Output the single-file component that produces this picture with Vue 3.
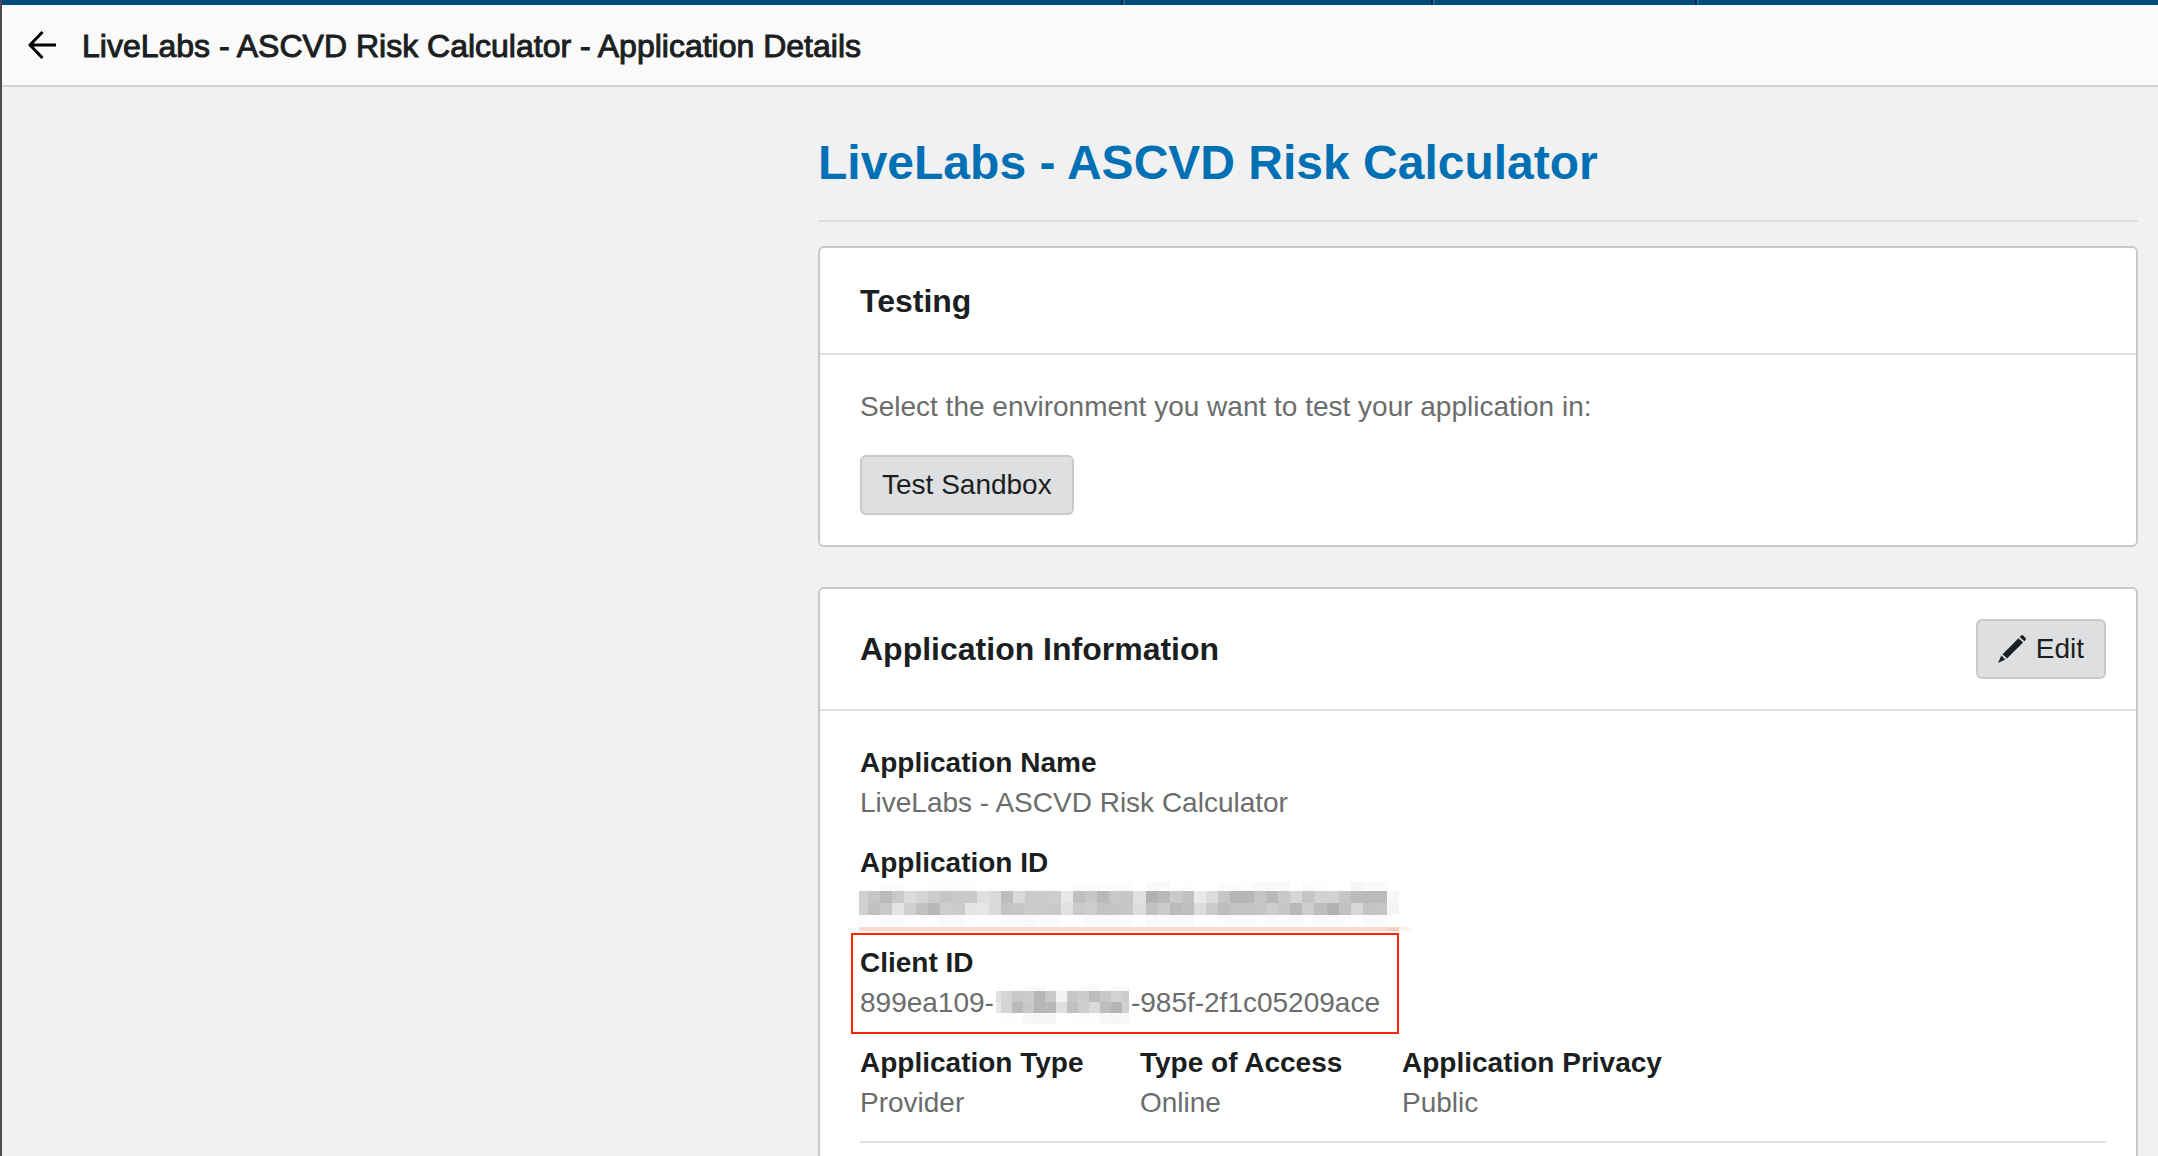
<script setup>
const cells = (y, height, list) =>
  list.split(' ').map((g, i) => ({ i, y, height, fill: '#' + g + g + g }))

const appIdMask = [
  ...cells(0, 9, 'ff ff fb fb ff fe fd fd fd fd fe fe ff fe ff ff fe fe fb fc fc fc fc ff fa fa ff fd ff ff fb fb fd f9 f9 fa ff fb fd ff ff f5 fa fa ff'),
  ...cells(9, 12, 'd0 c6 bb c9 db d5 cc c6 c8 c9 df da be da ca ca cd e8 c0 c7 b9 c8 c7 e1 b2 b9 ca c1 e9 dc c6 b6 b6 c5 ba c8 d6 c5 d2 d2 c6 bc ba ba f7'),
  ...cells(21, 12, 'd1 c0 c9 e3 d1 c2 b8 cd cb e5 e6 db c4 c7 cb cb c9 e1 ca cd c3 c4 c7 dc c2 cc ba be dc ca bd c4 c4 c5 ce c6 b8 cd bd b1 c1 d7 c3 c5 f5'),
  ...cells(33, 12, 'fc fd fb fb fd fd fe fa fa fd ff fe fb fb f9 fc fc ff fe fa fb fb fc ff fb fc fb fb ff ff fc fc fc fd fb fc fb fd fb fb fd ff fb fb ff'),
]

const clientIdMask = [
  ...cells(0, 5, 'ff ff ff fa fa ff ff ff fa fa ff f9 f9'),
  ...cells(5, 11, 'e0 d5 c8 cc b6 c8 f4 c8 cc bd c8 d3 cc'),
  ...cells(16, 11, 'e8 d4 ba c8 b6 b9 de c0 cd da be b5 d0'),
  ...cells(27, 11, 'ff fe fe f7 f6 f6 ff fe fc fd f7 f6 f8'),
]

const traits = [
  { label: 'Application Type', value: 'Provider' },
  { label: 'Type of Access', value: 'Online' },
  { label: 'Application Privacy', value: 'Public' },
]
</script>

<template>
  <div class="page">
    <div class="brand-bar">
      <span class="tab wide"></span>
      <span class="tab narrow"></span>
      <span class="tab last"></span>
    </div>

    <header class="titlebar">
      <button class="back" type="button" aria-label="Back">
        <svg width="28" height="28" viewBox="0 0 28 28" fill="none" stroke="#000" stroke-width="3">
          <path d="M14.500 1 2 14l12.500 13M2 14h26" stroke-linejoin="round" />
        </svg>
      </button>
      <span class="crumb">LiveLabs - ASCVD Risk Calculator - Application Details</span>
    </header>

    <main class="content">
      <h1>LiveLabs - ASCVD Risk Calculator</h1>

      <section class="card">
        <div class="card-head testing-head"><h2>Testing</h2></div>
        <div class="card-body">
          <p>Select the environment you want to test your application in:</p>
          <button class="btn" type="button">Test Sandbox</button>
        </div>
      </section>

      <section class="card info">
        <div class="card-head">
          <h2>Application Information</h2>
          <button class="btn" type="button">
            <svg width="28" height="28" viewBox="0 0 28 28" fill="#1b1f22">
              <path d="M0 28 3.300 20.500 7.300 24.500Z" />
              <path d="M4.600 19.200 20.500 3.200 25 7.600 9 23.400Z" />
              <path d="M21.700 1.900 23 .6q1-1 2.200 0l2.300 2.300q.9 1 0 2.100L26.400 6.300Z" />
            </svg>
            Edit
          </button>
        </div>
        <div class="card-body">
          <dl>
            <dt>Application Name</dt>
            <dd>LiveLabs - ASCVD Risk Calculator</dd>
          </dl>
          <dl>
            <dt>Application ID</dt>
            <dd class="masked">
              <svg class="app-mask" width="552" height="49" viewBox="3 0 549 49" preserveAspectRatio="none" shape-rendering="crispEdges" role="img" aria-label="Hidden">
                <rect v-for="(c, n) in appIdMask" :key="n" :x="c.i * 12" :y="c.y" width="12" :height="c.height" :fill="c.fill" />
                <rect x="0" y="45" width="528" height="4" fill="#ffd8d2" />
                <rect x="528" y="45" width="12" height="4" fill="#ffccc6" />
                <rect x="540" y="45" width="12" height="4" fill="#fff0ee" />
              </svg>
            </dd>
          </dl>
          <dl class="marked">
            <dt>Client ID</dt>
            <dd class="client">
              <span>899ea109-</span>
              <svg class="client-mask" width="133" height="38" viewBox="6 0 133 38" shape-rendering="crispEdges" role="img" aria-label="Hidden">
                <rect v-for="(c, n) in clientIdMask" :key="n" :x="c.i * 11" :y="c.y" width="11" :height="c.height" :fill="c.fill" />
              </svg>
              <span>-985f-2f1c05209ace</span>
            </dd>
          </dl>
          <div class="traits">
            <dl v-for="t in traits" :key="t.label">
              <dt>{{ t.label }}</dt>
              <dd>{{ t.value }}</dd>
            </dl>
          </div>
        </div>
      </section>
    </main>
  </div>
</template>

<style>
body {
  background: #f1f1f1;
}
</style>

<style scoped>
.page {
  box-sizing: border-box;
  display: flex;
  flex-direction: column;
  min-height: 100vh;
  border-left: 2px solid #4d4c51;
  background: #f1f1f1;
  color: #1b1f22;
  font-family: "Liberation Sans", Arial, sans-serif;
  font-size: 28px;
  line-height: 40px;
}

.brand-bar {
  display: flex;
  justify-content: flex-end;
  height: 5px;
  background: #004b7a;
}

.tab {
  box-sizing: border-box;
  border-left: 2px solid #00284a;
  box-shadow: inset 2px 0 #0a69a3;
}

.wide { width: 310px; }
.narrow { width: 264px; }
.last { width: 463px; }

.titlebar {
  display: flex;
  align-items: center;
  gap: 26px;
  height: 80px;
  padding-left: 26px;
  border-bottom: 2px solid #d2d4d3;
  background: #fafafa;
}

.back {
  display: flex;
  padding: 0;
  border: 0;
  background: none;
}

.crumb {
  padding-top: 2px;
  font-size: 32px;
  -webkit-text-stroke: 1px #1b1f22;
}

.content {
  display: flex;
  flex: 1;
  flex-direction: column;
  margin: 46px 20px 0 816px;
}

h1 {
  margin: 0 0 24px;
  padding-bottom: 27px;
  border-bottom: 2px solid #dfdfdf;
  color: #0070b5;
  font-size: 48px;
  line-height: 60px;
}

h2 {
  margin: 0;
  font-size: 32px;
}

.card {
  margin-bottom: 40px;
  border: 2px solid #c9c9c9;
  border-radius: 6px;
  background: #fff;
}

.card-head {
  display: flex;
  align-items: center;
  justify-content: space-between;
  padding: 30px 30px 30px 40px;
  border-bottom: 2px solid #dfdfdf;
}

.testing-head {
  padding: 33px 30px 32px 40px;
}

.card-body {
  padding: 32px 30px 30px 40px;
}

.info {
  flex: 1;
  margin-bottom: 0;
  border-bottom: 0;
  border-radius: 6px 6px 0 0;
}

.info .card-body {
  padding-bottom: 13px;
}

p {
  margin: 0 0 28px;
  color: #6b6d6c;
}

.btn {
  display: flex;
  align-items: center;
  gap: 10px;
  box-sizing: border-box;
  height: 60px;
  padding: 0 20px;
  border: 2px solid #c9c9c9;
  border-radius: 6px;
  background: #dedfe1;
  color: #1b1f22;
  font: inherit;
}

dl {
  margin: 0 0 20px;
}

dt {
  font-weight: bold;
}

dd {
  height: 40px;
  margin: 0;
  color: #6b6d6c;
}

.masked,
.marked {
  position: relative;
}

.app-mask {
  position: absolute;
  top: -1px;
  left: -1px;
}

.marked {
  width: 528px;
}

.marked::after {
  position: absolute;
  inset: -10px -11px -11px -9px;
  border: 2px solid #ff2600;
  content: "";
}

.client {
  display: flex;
  align-items: flex-start;
}

.client-mask {
  margin: 3px 2px 0;
}

.traits {
  display: grid;
  grid-template-columns: 280px 262px 1fr;
  border-bottom: 2px solid #dfdfdf;
}

.traits dl {
  margin-bottom: 18px;
}
</style>
